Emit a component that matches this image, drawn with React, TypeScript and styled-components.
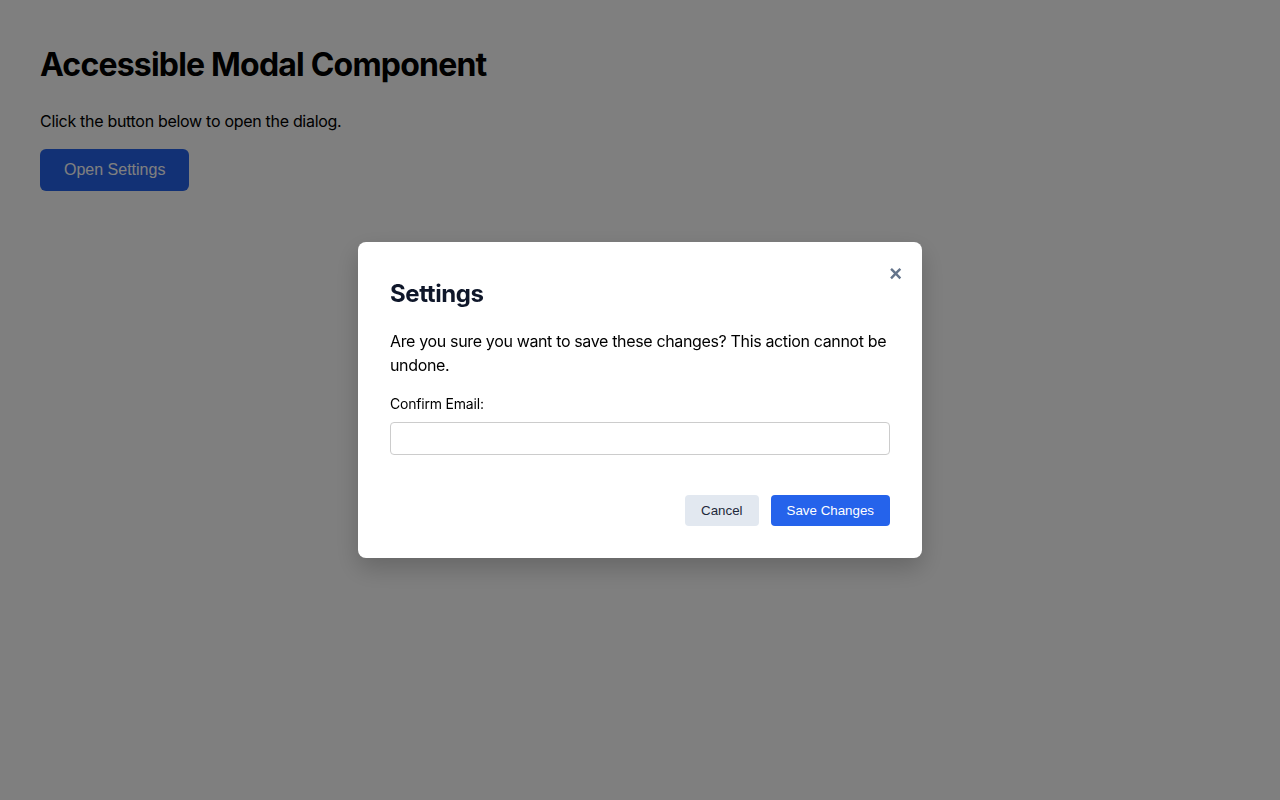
import React, { useState } from "react";
import styled, { createGlobalStyle } from "styled-components";

const GlobalStyle = createGlobalStyle`
  html, body {
    margin: 0;
    padding: 0;
    background: #fff;
  }
  body {
    font-family: Inter, "Noto Sans", sans-serif;
    color: #000;
  }
  * {
    box-sizing: border-box;
  }
`;

const Page = styled.main`
  padding: 40px;
  min-height: 800px;
`;

const Heading = styled.h1`
  margin: 6px 0 26px;
  font-size: 32px;
  line-height: 38px;
  font-weight: 700;
  letter-spacing: -0.8px;
`;

const Intro = styled.p`
  margin: 0 0 17px;
  font-size: 16px;
  line-height: 22px;
  letter-spacing: -0.3px;
`;

const OpenButton = styled.button`
  padding: 0 24px;
  height: 42px;
  border: none;
  border-radius: 6px;
  background: #2563eb;
  color: #fff;
  font-family: "Liberation Sans", Arial, sans-serif;
  font-size: 16px;
  cursor: pointer;
`;

const Backdrop = styled.div`
  position: fixed;
  inset: 0;
  background: rgba(0, 0, 0, 0.5);
  display: flex;
  align-items: center;
  justify-content: center;
`;

const Dialog = styled.div`
  position: relative;
  width: 564px;
  padding: 32px;
  background: #fff;
  border-radius: 8px;
  box-shadow: 0 10px 25px rgba(0, 0, 0, 0.2);
`;

const CloseButton = styled.button`
  position: absolute;
  top: 17px;
  right: 16px;
  padding: 4px;
  border: none;
  background: none;
  color: #64748b;
  font-family: "Liberation Sans", Arial, sans-serif;
  font-size: 22px;
  font-weight: 700;
  line-height: 22px;
  cursor: pointer;
`;

const Title = styled.h2`
  margin: 5px 0 20px;
  font-size: 24px;
  line-height: 30px;
  font-weight: 700;
  letter-spacing: -0.4px;
  color: #0f172a;
`;

const Message = styled.p`
  margin: 0 0 17px;
  font-size: 16px;
  line-height: 24px;
  letter-spacing: -0.35px;
`;

const Field = styled.div`
  display: flex;
  flex-direction: column;
  gap: 8px;
`;

const Label = styled.label`
  font-size: 14px;
  line-height: 20px;
  letter-spacing: -0.2px;
`;

const Input = styled.input`
  width: 100%;
  height: 33px;
  padding: 6px 8px;
  border: 1px solid #ccc;
  border-radius: 4px;
  font-size: 14px;
`;

const Footer = styled.div`
  display: flex;
  justify-content: flex-end;
  gap: 12px;
  margin-top: 40px;
`;

const ActionButton = styled.button<{ $primary?: boolean }>`
  height: 31px;
  padding: 0 16px;
  border: none;
  border-radius: 4px;
  background: ${(p) => (p.$primary ? "#2563eb" : "#e2e8f0")};
  color: ${(p) => (p.$primary ? "#fff" : "#1e293b")};
  font-family: "Liberation Sans", Arial, sans-serif;
  font-size: 13.333px;
  cursor: pointer;
`;

export default function App() {
  const [open, setOpen] = useState(true);

  return (
    <>
      <GlobalStyle />
      <Page>
        <Heading>Accessible Modal Component</Heading>
        <Intro>Click the button below to open the dialog.</Intro>
        <OpenButton onClick={() => setOpen(true)}>Open Settings</OpenButton>
      </Page>
      {open && (
        <Backdrop>
          <Dialog role="dialog" aria-modal="true" aria-labelledby="dlg-title">
            <CloseButton aria-label="Close" onClick={() => setOpen(false)}>
              ×
            </CloseButton>
            <Title id="dlg-title">Settings</Title>
            <Message>
              Are you sure you want to save these changes? This action cannot be
              undone.
            </Message>
            <Field>
              <Label htmlFor="email">Confirm Email:</Label>
              <Input id="email" type="email" />
            </Field>
            <Footer>
              <ActionButton onClick={() => setOpen(false)}>Cancel</ActionButton>
              <ActionButton $primary onClick={() => setOpen(false)}>
                Save Changes
              </ActionButton>
            </Footer>
          </Dialog>
        </Backdrop>
      )}
    </>
  );
}
